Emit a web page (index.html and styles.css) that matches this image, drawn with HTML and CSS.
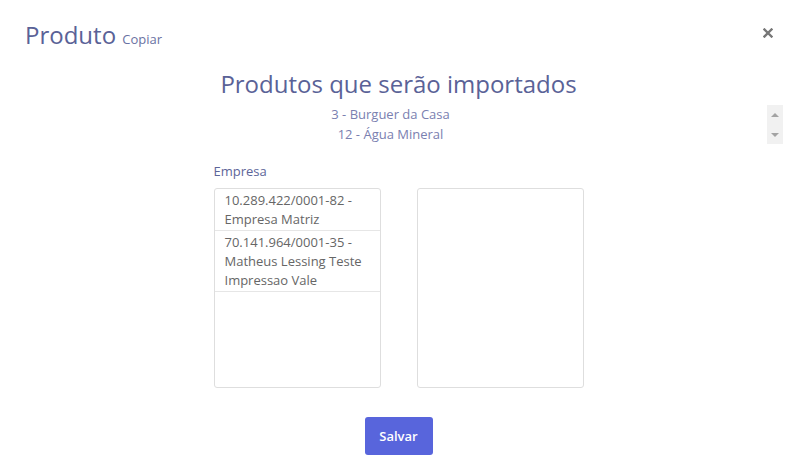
FILE: index.html
```html
<!DOCTYPE html>
<html lang="pt-BR">
<head>
<meta charset="utf-8">
<title>Produto Copiar</title>
<link rel="stylesheet" href="styles.css">
</head>
<body>
<div class="modal">
  <div class="modal-header">
    <h4 class="modal-title">Produto <small>Copiar</small></h4>
    <button class="close" aria-label="Fechar">
      <svg width="10" height="10" viewBox="0 0 10 10"><path d="M1.5 1.5 L8.5 8.5 M8.5 1.5 L1.5 8.5" stroke="#777" stroke-width="2.4" stroke-linecap="square"/></svg>
    </button>
  </div>
  <div class="modal-body">
    <h3 class="import-title">Produtos que serão importados</h3>
    <div class="import-list">
      <div class="import-items">
        <div>3 - Burguer da Casa</div>
        <div>12 - Água Mineral</div>
      </div>
      <div class="fake-scrollbar">
        <span class="arrow up"></span>
        <span class="arrow down"></span>
      </div>
    </div>
    <div class="form-group">
      <label class="label">Empresa</label>
      <div class="dual-list">
        <ul class="listbox">
          <li>10.289.422/0001-82 - Empresa Matriz</li>
          <li>70.141.964/0001-35 - Matheus Lessing Teste Impressao Vale</li>
        </ul>
        <ul class="listbox"></ul>
      </div>
    </div>
    <div class="actions">
      <button class="btn-primary">Salvar</button>
    </div>
  </div>
</div>
</body>
</html>
```

FILE: styles.css
```css
* { box-sizing: border-box; }
body {
  margin: 0;
  background: #fff;
  font-family: "Open Sans", "Noto Sans", sans-serif;
  color: #5d6599;
}
.modal-header {
  display: flex;
  justify-content: space-between;
  align-items: flex-start;
  padding: 20px 24px 0 25px;
}
.modal-title {
  margin: 0;
  font-size: 24px;
  line-height: 30px;
  font-weight: 500;
  color: #5a6297;
}
.modal-title small {
  font-size: 13px;
  font-weight: 400;
  color: #6a72a3;
}
.close {
  border: 0;
  background: none;
  padding: 0;
  margin-top: 8px;
  width: 10px;
  height: 10px;
  display: flex;
}
.modal-body {
  padding: 15px 14px 0 14px;
}
.import-title {
  margin: 0;
  text-align: center;
  font-size: 24px;
  line-height: 30px;
  font-weight: 500;
  color: #5a6297;
}
.import-list {
  display: flex;
  height: 39px;
  margin-top: 6px;
}
.import-items {
  flex: 1;
  text-align: center;
  font-size: 13px;
  line-height: 19.5px;
  color: #7a80b0;
}
.fake-scrollbar {
  width: 16px;
  background: #f1f1f1;
  display: flex;
  flex-direction: column;
  justify-content: space-between;
  align-items: center;
  padding: 8px 0 7px;
}
.arrow {
  width: 0;
  height: 0;
  border-left: 4px solid transparent;
  border-right: 4px solid transparent;
}
.arrow.up { border-bottom: 4px solid #a3a3a3; }
.arrow.down { border-top: 4px solid #a3a3a3; }
.form-group {
  width: 370px;
  margin: 18px auto 0;
}
.label {
  display: block;
  font-size: 13px;
  line-height: 19px;
  color: #5d6599;
  margin-bottom: 7px;
}
.dual-list {
  display: flex;
  justify-content: space-between;
}
.listbox {
  list-style: none;
  margin: 0;
  padding: 0;
  width: 167px;
  height: 200px;
  border: 1px solid #dedede;
  border-radius: 3px;
}
.listbox li {
  padding: 2px 10px 1px;
  font-size: 13px;
  line-height: 19px;
  color: #666;
  border-bottom: 1px solid #e6e6e6;
}
.actions {
  display: flex;
  justify-content: center;
  margin-top: 29px;
}
.btn-primary {
  width: 68px;
  height: 38px;
  border: 0;
  border-radius: 3px;
  background: #5865dc;
  color: #fff;
  font-family: inherit;
  font-size: 13px;
  font-weight: 600;
}
```
